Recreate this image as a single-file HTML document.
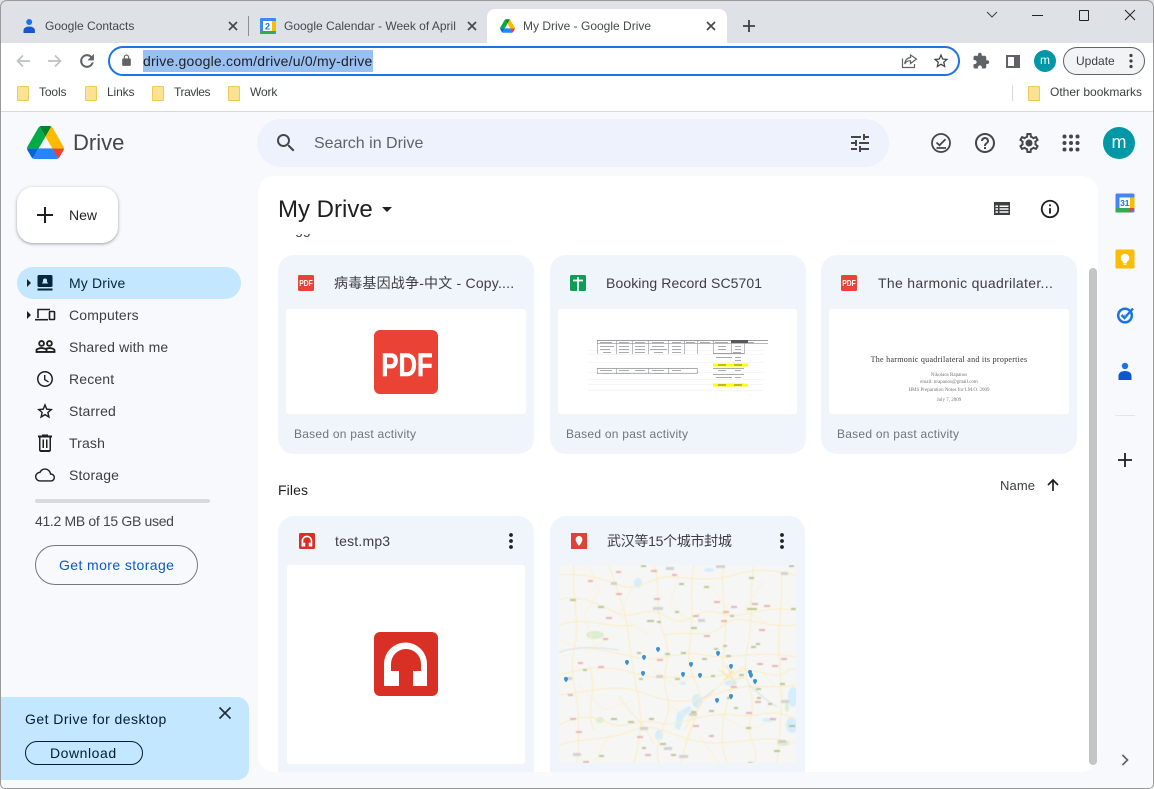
<!DOCTYPE html>
<html><head><meta charset="utf-8"><title>My Drive - Google Drive</title>
<style>
html,body{margin:0;padding:0;background:#f7f9fc}
body{width:1154px;height:789px;overflow:hidden;position:relative;font-family:"Liberation Sans","Noto Sans CJK SC",sans-serif;color:#1f1f1f}
.a{position:absolute}
.t{position:absolute;white-space:nowrap;line-height:20px;font-size:14px}
svg{position:absolute;display:block}
.tab{font-size:12px;color:#45494e}
.bm{font-size:12px;color:#3c4043;letter-spacing:-.12px}
.nav{font-size:14px;color:#3c4043;letter-spacing:.15px}
.card{position:absolute;background:#f0f4fb;border-radius:16px}
.thumb{position:absolute;background:#fff;border-radius:3px}
.ct{font-size:14px;color:#3c4043;letter-spacing:.1px}
.sub{font-size:12px;color:#70757a;letter-spacing:.25px}
.folder{position:absolute;width:10px;height:13px;background:#fde293;border:1px solid #f0c95c;border-radius:1px}
</style></head><body>

<!-- tab strip -->
<div class="a" style="left:0;top:0;width:1154px;height:43px;background:#dee1e6"></div>
<div class="a" style="left:0;top:43px;width:1154px;height:68px;background:#fff"></div>
<div class="a" style="left:0;top:111px;width:1154px;height:1px;background:#d6d8db"></div>

<svg style="left:21px;top:18px" width="16" height="16" viewBox="0 0 16 16"><circle cx="8.200" cy="4" r="3" fill="#1a73e8"/><path d="M2.500 15v-2.500c0-2.500 2.500-4 5.700-4s5.700 1.500 5.700 4V15z" fill="#1557d0"/></svg>
<div class="t tab" style="left:45px;top:16px">Google Contacts</div>
<svg style="left:227px;top:20px" width="12" height="12" viewBox="0 0 12 12"><path d="M2 2l8 8M10 2l-8 8" stroke="#45494e" stroke-width="1.700"/></svg>
<div class="a" style="left:248px;top:16px;width:1px;height:20px;background:#8b8e92"></div>

<svg style="left:260px;top:18px" width="16" height="16" viewBox="0 0 16 16"><rect width="16" height="16" rx="1" fill="#4285f4"/><rect x="12" y="3" width="4" height="10" fill="#fbbc04"/><rect y="13" width="13" height="3" fill="#34a853"/><rect x="3" y="3" width="9" height="10" fill="#fff"/><text x="7.500" y="11.500" font-size="9" font-weight="bold" text-anchor="middle" fill="#1a73e8" font-family="Liberation Sans">2</text></svg>
<div class="a" style="left:284px;top:16px;width:172px;height:20px;overflow:hidden"><div class="t tab" style="left:0;top:0">Google Calendar - Week of April</div></div>
<svg style="left:466px;top:20px" width="12" height="12" viewBox="0 0 12 12"><path d="M2 2l8 8M10 2l-8 8" stroke="#45494e" stroke-width="1.700"/></svg>

<div class="a" style="left:487px;top:9px;width:240px;height:34px;background:#fff;border-radius:8px 8px 0 0"></div>
<svg style="left:500px;top:19px" width="15" height="14" viewBox="0 0 87.300 78"><path d="m6.600 66.850 3.850 6.650c.8 1.400 1.950 2.500 3.300 3.300l13.750-23.800h-27.500c0 1.550.4 3.100 1.200 4.500z" fill="#0066da"/><path d="m43.650 25-13.750-23.800c-1.350.8-2.500 1.900-3.300 3.300l-25.400 44a9.060 9.060 0 0 0 -1.200 4.500h27.500z" fill="#00ac47"/><path d="m73.550 76.800c1.350-.8 2.500-1.900 3.300-3.300l1.600-2.750 7.650-13.250c.8-1.400 1.200-2.950 1.200-4.500h-27.502l5.852 11.500z" fill="#ea4335"/><path d="m43.650 25 13.750-23.800c-1.350-.8-2.900-1.200-4.500-1.200h-18.500c-1.600 0-3.150.45-4.500 1.200z" fill="#00832d"/><path d="m59.800 53h-32.300l-13.750 23.800c1.350.8 2.900 1.200 4.500 1.200h50.800c1.600 0 3.150-.45 4.500-1.200z" fill="#2684fc"/><path d="m73.400 26.500-12.700-22c-.8-1.400-1.950-2.500-3.300-3.300l-13.750 23.800 16.150 28h27.450c0-1.550-.4-3.100-1.200-4.500z" fill="#ffba00"/></svg>
<div class="t tab" style="left:523px;top:16px">My Drive - Google Drive</div>
<svg style="left:705px;top:20px" width="12" height="12" viewBox="0 0 12 12"><path d="M2 2l8 8M10 2l-8 8" stroke="#45494e" stroke-width="1.700"/></svg>
<svg style="left:741px;top:18px" width="16" height="16" viewBox="0 0 16 16"><path d="M8 2v12M2 8h12" stroke="#3c4043" stroke-width="1.800"/></svg>

<!-- window controls -->
<svg style="left:986px;top:10px" width="12" height="10" viewBox="0 0 12 10"><path d="M1 2l5 5 5-5" fill="none" stroke="#3c4043" stroke-width="1"/></svg>
<div class="a" style="left:1032px;top:15px;width:11px;height:1px;background:#222"></div>
<div class="a" style="left:1079px;top:10px;width:8px;height:9px;border:1px solid #222;border-radius:1px"></div>
<svg style="left:1124px;top:9px" width="12" height="12" viewBox="0 0 12 12"><path d="M1 1l10 10M11 1L1 11" stroke="#222" stroke-width="1"/></svg>

<!-- toolbar -->
<svg style="left:15px;top:53px" width="16" height="16" viewBox="0 0 16 16"><path d="M15 8H2.500M8 2.500L2.500 8 8 13.500" fill="none" stroke="#bfc1c4" stroke-width="1.700"/></svg>
<svg style="left:47px;top:53px" width="16" height="16" viewBox="0 0 16 16"><path d="M1 8h12.500M8 2.500L13.500 8 8 13.500" fill="none" stroke="#bfc1c4" stroke-width="1.700"/></svg>
<svg style="left:77px;top:51px" width="20" height="20" viewBox="0 0 24 24"><path fill="#5f6368" stroke="#5f6368" stroke-width=".5" d="M17.650 6.350C16.200 4.900 14.210 4 12 4c-4.420 0-7.990 3.580-7.990 8s3.570 8 7.990 8c3.730 0 6.840-2.550 7.730-6h-2.080c-.82 2.330-3.040 4-5.650 4-3.310 0-6-2.690-6-6s2.690-6 6-6c1.660 0 3.140.69 4.220 1.780L13 11h7V4l-2.350 2.350z"/></svg>
<div class="a" style="left:108px;top:46px;width:848px;height:26px;border:2px solid #1a73e8;border-radius:15px;background:#fff"></div>
<svg style="left:120px;top:54px" width="13" height="13" viewBox="0 0 24 24"><path fill="#5f6368" d="M18 8h-1V6c0-2.760-2.240-5-5-5S7 3.240 7 6v2H6c-1.100 0-2 .9-2 2v10c0 1.100.9 2 2 2h12c1.100 0 2-.9 2-2V10c0-1.100-.9-2-2-2zM9 6c0-1.660 1.340-3 3-3s3 1.340 3 3v2H9V6z"/></svg>
<div class="a" style="left:143px;top:50px;width:230px;height:22px;background:#99c0f2"></div>
<div class="t" style="left:143px;top:51px;font-size:14px;color:#202124;letter-spacing:.22px">drive.google.com/drive/u/0/my-drive</div>
<svg style="left:901px;top:53px" width="17" height="16" viewBox="0 0 17 16"><path d="M1.500 5.500v9h12V11M9.500 2v2.500C5.500 5 4 7.500 3.800 11c1.200-2.500 3-3.300 5.700-3.300V10.500L15.500 6z" fill="none" stroke="#5f6368" stroke-width="1.200"/></svg>
<svg style="left:932px;top:52px" width="18" height="18" viewBox="0 0 24 24"><path fill="#3c4043" d="M22 9.240l-7.190-.62L12 2 9.190 8.630 2 9.240l5.460 4.730L5.820 21 12 17.270 18.180 21l-1.630-7.030L22 9.240zM12 15.400l-3.760 2.270 1-4.280-3.320-2.880 4.380-.38L12 6.100l1.710 4.040 4.380.38-3.320 2.880 1 4.280L12 15.400z"/></svg>
<svg style="left:972px;top:52px" width="18" height="18" viewBox="0 0 24 24"><path fill="#5f6368" d="M20.500 11H19V7c0-1.100-.9-2-2-2h-4V3.500C13 2.120 11.880 1 10.500 1S8 2.120 8 3.500V5H4c-1.100 0-1.990.9-1.990 2v3.800H3.500c1.490 0 2.700 1.210 2.700 2.700s-1.210 2.700-2.700 2.700H2V20c0 1.100.9 2 2 2h3.800v-1.500c0-1.490 1.210-2.700 2.700-2.700 1.490 0 2.700 1.210 2.700 2.700V22H17c1.100 0 2-.9 2-2v-4h1.500c1.380 0 2.500-1.120 2.500-2.500S21.880 11 20.500 11z"/></svg>
<div class="a" style="left:1006px;top:55px;width:14px;height:13px;box-sizing:border-box;border:2px solid #5f6368;border-right-width:6px"></div>
<div class="a" style="left:1034px;top:50px;width:22px;height:22px;border-radius:50%;background:#0097a7;color:#fff;font-size:12px;line-height:21px;text-align:center">m</div>
<div class="a" style="left:1063px;top:47px;width:80px;height:26px;border:1px solid #5f6368;border-radius:14px;background:#f1f3f4"></div>
<div class="t" style="left:1076px;top:51px;font-size:12px;color:#3c4043">Update</div>
<svg style="left:1127px;top:52px" width="8" height="18" viewBox="0 0 8 18"><circle cx="4" cy="3.500" r="1.600" fill="#3c4043"/><circle cx="4" cy="9" r="1.600" fill="#3c4043"/><circle cx="4" cy="14.500" r="1.600" fill="#3c4043"/></svg>

<!-- bookmarks -->
<div class="folder" style="left:17px;top:86px"></div><div class="t bm" style="left:39px;top:82px">Tools</div>
<div class="folder" style="left:85px;top:86px"></div><div class="t bm" style="left:107px;top:82px">Links</div>
<div class="folder" style="left:152px;top:86px"></div><div class="t bm" style="left:174px;top:82px;letter-spacing:-.4px">Travles</div>
<div class="folder" style="left:228px;top:86px"></div><div class="t bm" style="left:250px;top:82px">Work</div>
<div class="a" style="left:1012px;top:85px;width:1px;height:16px;background:#d6d8db"></div>
<div class="folder" style="left:1028px;top:86px"></div><div class="t bm" style="left:1050px;top:82px;letter-spacing:0">Other bookmarks</div>

<!-- drive header -->
<svg style="left:27px;top:126px" width="37" height="33" viewBox="0 0 87.300 78"><path d="m6.600 66.850 3.850 6.650c.8 1.400 1.950 2.500 3.300 3.300l13.750-23.800h-27.500c0 1.550.4 3.100 1.200 4.500z" fill="#0066da"/><path d="m43.650 25-13.750-23.800c-1.350.8-2.500 1.900-3.300 3.300l-25.400 44a9.060 9.060 0 0 0 -1.200 4.500h27.500z" fill="#00ac47"/><path d="m73.550 76.800c1.350-.8 2.500-1.900 3.300-3.300l1.600-2.750 7.650-13.250c.8-1.400 1.200-2.950 1.200-4.500h-27.502l5.852 11.500z" fill="#ea4335"/><path d="m43.650 25 13.750-23.800c-1.350-.8-2.900-1.200-4.500-1.200h-18.500c-1.600 0-3.150.45-4.500 1.200z" fill="#00832d"/><path d="m59.800 53h-32.300l-13.750 23.800c1.350.8 2.900 1.200 4.500 1.200h50.800c1.600 0 3.150-.45 4.500-1.200z" fill="#2684fc"/><path d="m73.400 26.500-12.700-22c-.8-1.400-1.950-2.500-3.300-3.300l-13.750 23.800 16.150 28h27.450c0-1.550-.4-3.100-1.200-4.500z" fill="#ffba00"/></svg>
<div class="t" style="left:73px;top:133px;font-size:22px;color:#444746">Drive</div>

<div class="a" style="left:257px;top:119px;width:632px;height:48px;background:#edf2fc;border-radius:24px"></div>
<svg style="left:274px;top:131px" width="24" height="24" viewBox="0 0 24 24"><path fill="#444746" d="M15.500 14h-.79l-.28-.27A6.471 6.471 0 0 0 16 9.500 6.500 6.500 0 1 0 9.500 16c1.610 0 3.090-.59 4.230-1.570l.27.28v.79l5 4.990L20.490 19l-4.990-5zm-6 0C7.010 14 5 11.990 5 9.500S7.010 5 9.500 5 14 7.010 14 9.500 11.990 14 9.500 14z"/></svg>
<div class="t" style="left:314px;top:134px;font-size:16px;color:#5f6368">Search in Drive</div>
<svg style="left:848px;top:131px" width="24" height="24" viewBox="0 0 24 24"><path fill="#444746" d="M3 17v2h6v-2H3zM3 5v2h10V5H3zm10 16v-2h8v-2h-8v-2h-2v6h2zM7 9v2H3v2h4v2h2V9H7zm14 4v-2H11v2h10zm-6-4h2V7h4V5h-4V3h-2v6z"/></svg>

<svg style="left:929px;top:131px" width="24" height="24" viewBox="0 0 24 24"><circle cx="12" cy="12" r="9" fill="none" stroke="#444746" stroke-width="1.800"/><path d="M7.500 11.500l3 2.800 6-6M7.500 17h9.500" fill="none" stroke="#444746" stroke-width="1.800"/></svg>
<svg style="left:973px;top:131px" width="24" height="24" viewBox="0 0 24 24"><path fill="#444746" d="M11 18h2v-2h-2v2zm1-16C6.480 2 2 6.480 2 12s4.480 10 10 10 10-4.480 10-10S17.520 2 12 2zm0 18c-4.410 0-8-3.590-8-8s3.590-8 8-8 8 3.590 8 8-3.590 8-8 8zm0-14c-2.210 0-4 1.790-4 4h2c0-1.100.9-2 2-2s2 .9 2 2c0 2-3 1.750-3 5h2c0-2.250 3-2.500 3-5 0-2.210-1.790-4-4-4z"/></svg>
<svg style="left:1017px;top:131px" width="24" height="24" viewBox="0 0 24 24"><path fill="#444746" d="M19.430 12.980c.04-.32.07-.64.07-.98 0-.34-.03-.66-.07-.98l2.110-1.650c.19-.15.24-.42.12-.64l-2-3.460a.5.5 0 0 0-.61-.22l-2.490 1c-.52-.4-1.080-.73-1.690-.98l-.38-2.650A.488.488 0 0 0 14 2h-4c-.25 0-.46.18-.49.42l-.38 2.650c-.61.25-1.170.59-1.690.98l-2.490-1a.566.566 0 0 0-.18-.03c-.17 0-.34.09-.43.25l-2 3.460c-.13.22-.07.49.12.64l2.110 1.650c-.04.32-.07.65-.07.98 0 .33.03.66.07.98l-2.110 1.650c-.19.15-.24.42-.12.64l2 3.460a.5.5 0 0 0 .61.22l2.490-1c.52.4 1.080.73 1.690.98l.38 2.650c.03.24.24.42.49.42h4c.25 0 .46-.18.49-.42l.38-2.650c.61-.25 1.170-.59 1.690-.98l2.490 1c.06.02.12.03.18.03.17 0 .34-.09.43-.25l2-3.460c.12-.22.07-.49-.12-.64l-2.110-1.650zm-1.980-1.710c.04.31.05.52.05.73 0 .21-.02.43-.05.73l-.14 1.130.89.7 1.080.84-.7 1.210-1.270-.51-1.040-.42-.9.68c-.43.32-.84.56-1.250.73l-1.060.43-.16 1.130-.2 1.350h-1.400l-.19-1.350-.16-1.130-1.060-.43c-.43-.18-.83-.41-1.230-.71l-.91-.7-1.060.43-1.270.51-.7-1.210 1.080-.84.89-.7-.14-1.130c-.03-.31-.05-.54-.05-.74s.02-.43.05-.73l.14-1.130-.89-.7-1.080-.84.7-1.210 1.270.51 1.040.42.9-.68c.43-.32.84-.56 1.250-.73l1.060-.43.16-1.130.2-1.350h1.390l.19 1.350.16 1.130 1.060.43c.43.18.83.41 1.230.71l.91.7 1.060-.43 1.270-.51.7 1.210-1.070.85-.89.7.14 1.130z"/><circle cx="12" cy="12" r="3.500" fill="#444746"/></svg>
<svg style="left:1061px;top:133px" width="20" height="20" viewBox="0 0 20 20" fill="#444746"><circle cx="3.500" cy="3.500" r="2"/><circle cx="10" cy="3.500" r="2"/><circle cx="16.500" cy="3.500" r="2"/><circle cx="3.500" cy="10" r="2"/><circle cx="10" cy="10" r="2"/><circle cx="16.500" cy="10" r="2"/><circle cx="3.500" cy="16.500" r="2"/><circle cx="10" cy="16.500" r="2"/><circle cx="16.500" cy="16.500" r="2"/></svg>
<div class="a" style="left:1103px;top:127px;width:32px;height:32px;border-radius:50%;background:#0097a7;color:#fff;font-size:18px;line-height:30px;text-align:center">m</div>

<!-- sidebar -->
<div class="a" style="left:17px;top:187px;width:101px;height:56px;background:#fff;border-radius:16px;box-shadow:0 1px 2px rgba(60,64,67,.3),0 1px 3px 1px rgba(60,64,67,.15)"></div>
<svg style="left:33px;top:203px" width="24" height="24" viewBox="0 0 24 24"><path d="M12 4v16M4 12h16" stroke="#1f1f1f" stroke-width="2"/></svg>
<div class="t" style="left:69px;top:205px;font-size:14px;color:#1f1f1f">New</div>

<div class="a" style="left:17px;top:267px;width:224px;height:32px;border-radius:16px;background:#c2e7ff"></div>
<svg style="left:27px;top:279px" width="5" height="8" viewBox="0 0 5 8"><path d="M0 0l4 4-4 4z" fill="#1f1f1f"/></svg>
<svg style="left:27px;top:311px" width="5" height="8" viewBox="0 0 5 8"><path d="M0 0l4 4-4 4z" fill="#1f1f1f"/></svg>

<svg style="left:36px;top:273px" width="18" height="20" viewBox="0 0 18 20"><rect x="1.500" y="2" width="15" height="12" rx="1.500" fill="#04263f"/><rect x="1.500" y="15.500" width="15" height="2" fill="#04263f"/><path d="M6 10.500l1.500-3h3l1.500 3z" fill="#c2e7ff"/><circle cx="9" cy="7.500" r="2" fill="#c2e7ff"/></svg>
<div class="t nav" style="left:69px;top:273px;color:#04263f">My Drive</div>

<svg style="left:35px;top:305px" width="21" height="20" viewBox="0 0 21 20"><path d="M3 13V4.500h12" fill="none" stroke="#1f1f1f" stroke-width="1.600"/><path d="M0 14.700h13" stroke="#1f1f1f" stroke-width="1.600"/><rect x="14.500" y="6.500" width="5" height="8" rx=".8" fill="none" stroke="#1f1f1f" stroke-width="1.600"/></svg>
<div class="t nav" style="left:69px;top:305px">Computers</div>

<svg style="left:35px;top:336px" width="21" height="21" viewBox="0 0 24 24"><path fill="#1f1f1f" stroke="#1f1f1f" stroke-width=".6" d="M16.500 13c-1.200 0-3.070.34-4.500 1-1.430-.67-3.300-1-4.500-1C5.330 13 1 14.080 1 16.250V19h22v-2.750c0-2.170-4.330-3.250-6.500-3.250zm-4 4.500h-10v-1.250c0-.54 2.560-1.750 5-1.750s5 1.210 5 1.750v1.250zm9 0H14v-1.250c0-.46-.2-.86-.52-1.220.88-.3 1.960-.53 3.020-.53 2.440 0 5 1.210 5 1.750v1.250zM7.500 12c1.930 0 3.500-1.570 3.500-3.500S9.430 5 7.500 5 4 6.570 4 8.500 5.570 12 7.500 12zm0-5.500c1.100 0 2 .9 2 2s-.9 2-2 2-2-.9-2-2 .9-2 2-2zm9 5.500c1.930 0 3.500-1.570 3.500-3.500S18.430 5 16.500 5 13 6.570 13 8.500s1.570 3.500 3.500 3.500zm0-5.500c1.100 0 2 .9 2 2s-.9 2-2 2-2-.9-2-2 .9-2 2-2z"/></svg>
<div class="t nav" style="left:69px;top:337px">Shared with me</div>

<svg style="left:33px;top:367px" width="24" height="24" viewBox="0 0 24 24"><path fill="#1f1f1f" d="M11.990 4C7.570 4 4 7.580 4 12s3.570 8 7.990 8C16.420 20 20 16.420 20 12s-3.580-8-8.010-8zM12 18.500c-3.590 0-6.500-2.910-6.500-6.500S8.410 5.500 12 5.500s6.500 2.910 6.500 6.500-2.910 6.500-6.500 6.500zM12.400 8H11v5l4.200 2.500.7-1.100-3.500-2.100z"/></svg>
<div class="t nav" style="left:69px;top:369px">Recent</div>

<svg style="left:33px;top:399px" width="24" height="24" viewBox="0 0 24 24"><path fill="#1f1f1f" d="M20 10l-5.800-.5L12 4 9.800 9.500 4 10l4.400 3.800L7 19.500l5-3 5 3-1.300-5.700L20 10zm-8 4.800l-2.800 1.700.7-3.200-2.400-2.100 3.200-.3L12 7.900l1.300 3 3.200.3-2.400 2.100.7 3.200-2.800-1.700z"/></svg>
<div class="t nav" style="left:69px;top:401px">Starred</div>

<svg style="left:33px;top:431px" width="24" height="24" viewBox="0 0 24 24"><path fill="#1f1f1f" d="M15 4.500V3.500H9v1H5v2h1v12.500c0 1.100.9 2 2 2h8c1.100 0 2-.9 2-2V6.500h1v-2h-4zm1.500 14.500h-9V6.500h9V19zM9.500 8.500H11V17H9.500zm3.500 0h1.500V17H13z"/></svg>
<div class="t nav" style="left:69px;top:433px">Trash</div>

<svg style="left:35px;top:464px" width="20" height="22" viewBox="0 0 24 24"><path fill="#1f1f1f" d="M19.350 10.040C18.670 6.590 15.640 4 12 4 9.110 4 6.600 5.640 5.350 8.040 2.340 8.360 0 10.910 0 14c0 3.310 2.690 6 6 6h13c2.760 0 5-2.240 5-5 0-2.640-2.050-4.780-4.650-4.960zM19 18.300H6c-2.300 0-4.300-1.900-4.300-4.300 0-2.200 1.600-4 3.800-4.300l1-.1.5-.9C8 6.800 9.900 5.700 12 5.700c2.800 0 5.100 2 5.700 4.700l.3 1.300 1.400.1c1.700.1 2.900 1.500 2.900 3.200 0 1.800-1.500 3.300-3.300 3.300z"/></svg>
<div class="t nav" style="left:69px;top:465px">Storage</div>

<div class="a" style="left:35px;top:499px;width:175px;height:4px;border-radius:2px;background:#d9dadc"></div>
<div class="t" style="left:35px;top:511px;font-size:14px;color:#444746;letter-spacing:-.33px">41.2 MB of 15 GB used</div>
<div class="a" style="left:35px;top:545px;width:161px;height:38px;border:1px solid #747775;border-radius:20px"></div>
<div class="t" style="left:59px;top:555px;font-size:14px;color:#0b57d0;letter-spacing:.4px">Get more storage</div>

<!-- desktop promo -->
<div class="a" style="left:1px;top:697px;width:248px;height:83px;background:#c2e7ff;border-radius:0 12px 12px 0"></div>
<div class="t" style="left:25px;top:709px;font-size:14px;color:#001d35;letter-spacing:.45px">Get Drive for desktop</div>
<svg style="left:218px;top:706px" width="14" height="14" viewBox="0 0 14 14"><path d="M1.500 1.500l11 11M12.500 1.500l-11 11" stroke="#1f2a36" stroke-width="1.600"/></svg>
<div class="a" style="left:25px;top:741px;width:116px;height:22px;border:1px solid #001d35;border-radius:12px"></div>
<div class="t" style="left:50px;top:743px;font-size:14px;color:#001d35;letter-spacing:.55px">Download</div>

<!-- main panel -->
<div class="a" style="left:258px;top:176px;width:840px;height:596px;background:#fff;border-radius:16px"></div>
<div class="t" style="left:278px;top:199px;font-size:24px;line-height:22px;color:#1f1f1f">My Drive</div>
<svg style="left:382px;top:207px" width="11" height="5" viewBox="0 0 11 5"><path d="M0 0h10L5 5z" fill="#1f1f1f"/></svg>
<svg style="left:994px;top:202px" width="16" height="13" viewBox="0 0 16 13"><path fill="#3c4043" d="M0 0h16v13H0z"/><path fill="#fff" d="M1.500 3.500h2.500v1.500H1.500zM5.500 3.500h9v1.500h-9zM1.500 6.300h2.500v1.500H1.500zM5.500 6.300h9v1.500h-9zM1.500 9.200h2.500v1.500H1.500zM5.500 9.200h9v1.500h-9z"/></svg>
<svg style="left:1039px;top:198px" width="22" height="22" viewBox="0 0 24 24"><path fill="#1f1f1f" d="M11 7h2v2h-2zm0 4h2v6h-2zm1-9C6.480 2 2 6.480 2 12s4.480 10 10 10 10-4.480 10-10S17.520 2 12 2zm0 18c-4.410 0-8-3.590-8-8s3.590-8 8-8 8 3.590 8 8-3.590 8-8 8z"/></svg>

<div class="a" style="left:278px;top:234px;width:60px;height:5px;overflow:hidden"><div class="t" style="left:0;top:-15px;font-size:14px;color:#3c4043">Suggested</div></div>

<!-- scrollbar -->
<div class="a" style="left:1089px;top:268px;width:8px;height:497px;border-radius:4px;background:#c4c4c4"></div>

<!-- suggested cards -->
<div class="card" style="left:278px;top:255px;width:256px;height:199px"></div>
<div class="thumb" style="left:286px;top:309px;width:240px;height:105px"></div>
<svg style="left:298px;top:275px" width="16" height="16" viewBox="0 0 16 16"><rect width="16" height="16" rx="1.500" fill="#ea4335"/><text transform="translate(8 11) scale(.8 1)" font-size="8.500" font-weight="bold" text-anchor="middle" fill="#fff" font-family="Liberation Sans">PDF</text></svg>
<div class="a" style="left:334px;top:273px;width:184px;height:20px;overflow:hidden"><div class="t ct" style="left:0;top:0;letter-spacing:.2px">病毒基因战争-中文 - Copy....</div></div>
<svg style="left:374px;top:330px" width="64" height="64" viewBox="0 0 64 64"><rect width="64" height="64" rx="6" fill="#ea4335"/><text transform="translate(33 46) scale(.8 1)" font-size="32" font-weight="bold" text-anchor="middle" fill="#fff" stroke="#fff" stroke-width=".6" font-family="Liberation Sans">PDF</text></svg>
<div class="t sub" style="left:294px;top:424px">Based on past activity</div>

<div class="card" style="left:550px;top:255px;width:256px;height:199px"></div>
<div class="thumb" style="left:558px;top:309px;width:239px;height:105px"></div>
<svg style="left:570px;top:275px" width="16" height="16" viewBox="0 0 16 16"><rect width="16" height="16" rx="1.500" fill="#0f9d58"/><path d="M3 5.500h10M8 2v14" stroke="#fff" stroke-width="1.700"/></svg>
<div class="t ct" style="left:606px;top:273px">Booking Record SC5701</div>
<svg style="left:588px;top:338px" width="180" height="55" viewBox="0 0 180 55">
<defs><filter id="s" x="-2%" y="-5%" width="104%" height="110%"><feGaussianBlur stdDeviation=".35"/></filter></defs>
<g filter="url(#s)">
<g fill="#eceef0"><rect x="0" y="12" width="175" height=".6"/><rect x="0" y="16" width="175" height=".6"/><rect x="0" y="24" width="175" height=".6"/><rect x="0" y="34" width="175" height=".6"/><rect x="0" y="41" width="175" height=".6"/><rect x="0" y="46" width="175" height=".6"/><rect x="0" y="52" width="175" height=".6"/></g>
<g fill="#6f7276"><rect x="9" y="2" width="171" height=".7"/><rect x="9" y="5.500" width="171" height=".5"/><rect x="125" y="15" width="31" height=".7"/><rect x="125" y="30" width="31" height=".6"/><rect x="125" y="36" width="31" height=".6"/><rect x="9" y="30" width="100" height=".6"/><rect x="9" y="35" width="100" height=".5"/></g>
<g fill="#8d9094"><rect x="9" y="2" width=".6" height="14"/><rect x="28" y="2" width=".6" height="14"/><rect x="44" y="2" width=".6" height="14"/><rect x="60" y="2" width=".6" height="14"/><rect x="80" y="2" width=".6" height="14"/><rect x="96" y="2" width=".6" height="14"/><rect x="109" y="2" width=".6" height="14"/><rect x="125" y="2" width=".6" height="14"/><rect x="143" y="2" width=".6" height="14"/><rect x="156" y="2" width=".6" height="14"/><rect x="9" y="30" width=".6" height="6"/><rect x="28" y="30" width=".6" height="6"/><rect x="60" y="30" width=".6" height="6"/><rect x="80" y="30" width=".6" height="6"/><rect x="109" y="30" width=".6" height="6"/></g>
<g fill="#a8aaad"><rect x="12" y="4" width="12" height="1"/><rect x="31" y="4" width="10" height="1"/><rect x="47" y="4" width="10" height="1"/><rect x="64" y="4" width="12" height="1"/><rect x="84" y="4" width="9" height="1"/><rect x="98" y="4" width="9" height="1"/><rect x="112" y="4" width="10" height="1"/><rect x="127" y="4" width="13" height="1"/><rect x="159" y="4" width="7" height="1"/><rect x="12" y="8" width="14" height="1"/><rect x="31" y="8" width="10" height="1"/><rect x="47" y="8" width="10" height="1"/><rect x="64" y="8" width="12" height="1"/><rect x="84" y="8" width="9" height="1"/><rect x="130" y="8" width="8" height="1"/><rect x="147" y="8" width="6" height="1"/><rect x="12" y="11" width="10" height="1"/><rect x="31" y="11" width="10" height="1"/><rect x="47" y="11" width="10" height="1"/><rect x="62" y="11" width="17" height="1"/><rect x="84" y="11" width="9" height="1"/><rect x="130" y="11" width="8" height="1"/><rect x="147" y="11" width="6" height="1"/><rect x="15" y="14" width="8" height="1"/><rect x="31" y="14" width="10" height="1"/><rect x="47" y="14" width="10" height="1"/><rect x="66" y="14" width="9" height="1"/><rect x="84" y="14" width="9" height="1"/><rect x="145" y="14" width="8" height="1"/><rect x="128" y="19" width="16" height="1"/><rect x="147" y="19" width="6" height="1"/><rect x="147" y="22" width="6" height="1"/><rect x="12" y="32" width="12" height="1"/><rect x="31" y="32" width="10" height="1"/><rect x="47" y="32" width="10" height="1"/><rect x="64" y="32" width="12" height="1"/><rect x="84" y="32" width="9" height="1"/><rect x="130" y="32" width="8" height="1"/><rect x="147" y="32" width="6" height="1"/><rect x="15" y="35" width="8" height="1"/><rect x="31" y="35" width="10" height="1"/><rect x="66" y="35" width="9" height="1"/><rect x="128" y="39" width="16" height="1"/><rect x="147" y="39" width="6" height="1"/></g>
<rect x="143" y="2" width="17" height="3" fill="#55585c"/>
<rect x="125" y="25.500" width="35" height="3" fill="#ffff00"/><rect x="125" y="45.500" width="35" height="3" fill="#ffff00"/>
<rect x="130" y="26.500" width="8" height="1" fill="#807a30"/><rect x="146" y="26.500" width="8" height="1" fill="#807a30"/><rect x="130" y="46.500" width="8" height="1" fill="#807a30"/><rect x="146" y="46.500" width="8" height="1" fill="#807a30"/>
</g>
</svg>
<div class="t sub" style="left:566px;top:424px">Based on past activity</div>

<div class="card" style="left:821px;top:255px;width:256px;height:199px"></div>
<div class="thumb" style="left:829px;top:309px;width:240px;height:105px"></div>
<svg style="left:841px;top:275px" width="16" height="16" viewBox="0 0 16 16"><rect width="16" height="16" rx="1.500" fill="#ea4335"/><text transform="translate(8 11) scale(.8 1)" font-size="8.500" font-weight="bold" text-anchor="middle" fill="#fff" font-family="Liberation Sans">PDF</text></svg>
<div class="t ct" style="left:878px;top:273px;letter-spacing:.32px">The harmonic quadrilater...</div>
<div class="a" style="left:829px;top:355px;width:240px;text-align:center;font-family:'Liberation Serif',serif;font-size:8px;line-height:10px;color:#333;letter-spacing:.28px;white-space:nowrap">The harmonic quadrilateral and its properties</div>
<div class="a" style="left:829px;top:372px;width:240px;text-align:center;font-family:'Liberation Serif',serif;font-size:5px;line-height:7px;color:#777;white-space:nowrap">Nikolaos Rapanos</div>
<div class="a" style="left:829px;top:379px;width:240px;text-align:center;font-family:'Liberation Serif',serif;font-size:5px;line-height:7px;color:#777;white-space:nowrap">email: nrapanos@gmail.com</div>
<div class="a" style="left:829px;top:387px;width:240px;text-align:center;font-family:'Liberation Serif',serif;font-size:5px;line-height:7px;color:#777;white-space:nowrap">HMS Preparation Notes for I.M.O. 2009</div>
<div class="a" style="left:829px;top:397px;width:240px;text-align:center;font-family:'Liberation Serif',serif;font-size:5px;line-height:7px;color:#777;white-space:nowrap">July 7, 2009</div>
<div class="t sub" style="left:837px;top:424px">Based on past activity</div>

<!-- files -->
<div class="t" style="left:278px;top:480px;font-size:14px;color:#1f1f1f;letter-spacing:.1px">Files</div>
<div class="t" style="left:1000px;top:476px;font-size:13px;color:#3c4043;letter-spacing:.1px">Name</div>
<svg style="left:1046px;top:478px" width="14" height="14" viewBox="0 0 14 14"><path d="M7 13V2M2 7l5-5 5 5" fill="none" stroke="#1f1f1f" stroke-width="1.700"/></svg>

<div class="a" style="left:278px;top:516px;width:527px;height:256px;overflow:hidden">
  <div class="card" style="left:0;top:0;width:256px;height:270px"></div>
  <div class="thumb" style="left:9px;top:49px;width:238px;height:199px"></div>
  <div class="card" style="left:272px;top:0;width:255px;height:270px"></div>
</div>
<svg style="left:299px;top:533px" width="16" height="16" viewBox="0 0 64 64"><rect width="64" height="64" rx="6" fill="#d93025"/><path d="M10 54V32a21.500 21.500 0 0 1 43 0V54H39V39H47V32a15 15 0 0 0-30 0V39H25V54z" fill="#fff"/></svg>
<div class="t ct" style="left:335px;top:531px;letter-spacing:.2px">test.mp3</div>
<svg style="left:507px;top:532px" width="8" height="18" viewBox="0 0 8 18" fill="#1f1f1f"><circle cx="4" cy="3" r="1.900"/><circle cx="4" cy="9" r="1.900"/><circle cx="4" cy="15" r="1.900"/></svg>
<svg style="left:374px;top:632px" width="64" height="64" viewBox="0 0 64 64"><rect width="64" height="64" rx="6" fill="#d93025"/><path d="M10 54V32a21.500 21.500 0 0 1 43 0V54H39V39H47V32a15 15 0 0 0-30 0V39H25V54z" fill="#fff"/></svg>

<svg style="left:571px;top:533px" width="16" height="16" viewBox="0 0 16 16"><rect width="16" height="16" fill="#df4337"/><path d="M8 3a3.400 3.400 0 0 1 3.400 3.400C11.400 9 8 13 8 13S4.600 9 4.600 6.400A3.400 3.400 0 0 1 8 3z" fill="#fff"/></svg>
<div class="t ct" style="left:607px;top:531px;letter-spacing:-.3px">武汉等15个城市封城</div>
<svg style="left:778px;top:532px" width="8" height="18" viewBox="0 0 8 18" fill="#1f1f1f"><circle cx="4" cy="3" r="1.900"/><circle cx="4" cy="9" r="1.900"/><circle cx="4" cy="15" r="1.900"/></svg>

<svg style="left:559px;top:565px" width="237" height="198" viewBox="0 0 237 198">
<defs><filter id="b" x="-5%" y="-5%" width="110%" height="110%"><feGaussianBlur stdDeviation=".5"/></filter></defs>
<rect width="237" height="198" fill="#f6f6f5"/>
<g filter="url(#b)">
<g fill="#d4eefb"><ellipse cx="79" cy="18" rx="4" ry="5"/><ellipse cx="138" cy="136" rx="5" ry="7"/><path d="M118 148l12-7 3 3-9 9-3 12-5-2z"/><ellipse cx="234" cy="132" rx="5" ry="10"/><ellipse cx="233" cy="160" rx="6" ry="8"/><ellipse cx="100" cy="170" rx="4" ry="5"/><ellipse cx="124" cy="118" rx="3" ry="2"/><ellipse cx="172" cy="118" rx="6" ry="3"/><ellipse cx="210" cy="155" rx="7" ry="2"/><ellipse cx="150" cy="5" rx="5" ry="2"/></g>
<g fill="#dcedd0"><ellipse cx="36" cy="70" rx="9" ry="4"/><ellipse cx="41" cy="155" rx="4" ry="3"/><ellipse cx="224" cy="178" rx="6" ry="3"/><ellipse cx="228" cy="142" rx="2" ry="5"/></g>
<g fill="none" stroke="#fcecc0" stroke-width="1">
<path d="M0 10C20 8 40 12 60 20S90 12 110 12 150 18 175 10 215 6 237 10"/>
<path d="M0 35C20 28 40 40 58 48S85 38 108 52 135 40 160 48 200 40 237 45"/>
<path d="M0 88C20 78 45 85 75 92S115 84 145 90 190 84 237 92"/>
<path d="M0 110C25 102 50 100 75 108S115 110 140 112 180 100 205 108 225 100 237 105"/>
<path d="M0 130C30 126 60 118 85 128S125 140 160 128 200 125 237 120"/>
<path d="M0 160C20 150 35 150 50 158S80 152 100 158 140 146 175 150 210 140 237 155"/>
<path d="M0 180C25 172 50 176 75 165S120 180 160 178 200 170 237 178"/>
<path d="M15 0C12 30 22 55 15 85S25 130 18 198"/>
<path d="M50 0C58 25 65 40 68 60S72 95 78 125 82 170 75 198"/>
<path d="M95 0C102 20 95 45 105 70S100 105 108 130 92 170 100 198"/>
<path d="M135 0C130 25 135 45 132 70S128 100 138 120 128 165 122 198"/>
<path d="M165 0C160 28 170 50 165 85S172 108 172 120 155 165 168 198"/>
<path d="M195 0C190 25 195 55 188 85S198 125 192 150 200 180 196 198"/>
<path d="M222 10C225 35 218 60 220 90S225 130 218 198"/>
<path d="M0 60C30 50 50 65 75 60"/>
<path d="M105 70C130 65 150 75 165 60S205 65 237 60"/>
<path d="M172 110L145 135 125 165"/>
<path d="M165 100l10 10 8-8 12 10"/>
<path d="M60 130C70 150 85 155 95 180"/>
<path d="M30 100C40 125 25 145 35 165"/>
</g>
<g fill="none" stroke="#fdf0cf" stroke-width=".8">
<path d="M30 0l10 25 -15 25 10 30M75 20l-15 30 30 20M120 10l-10 30 20 15M150 20l20 25 -10 20M205 15l-20 30 25 15M0 75l30 10 25-15M90 100l25 20 30-10M20 120l25 25 30-10M110 140l25 15 -10 25M160 150l30 15 25-10M50 170l-15 28M140 170l20 28M205 110l20 20"/>
</g>
<g fill="none" stroke="#fae3a0" stroke-width="1"><path d="M160 105l15 10 10-3M165 115l10-10M168 100l8 20"/></g>
<path d="M0 87c20-6 40-5 60-2" fill="none" stroke="#d5e2ee" stroke-width="1"/>
<path d="M190 120c10 8 15 14 28 22" fill="none" stroke="#dfe4e8" stroke-width="1.200"/>
<path d="M135 140c6-6 12-8 20-15" fill="none" stroke="#dfe4e8" stroke-width="1.200"/>
</g>
<g filter="url(#b)" opacity=".75">
<g fill="#e3a09c"><rect x="29" y="15" width="5" height="2"/><rect x="57" y="6" width="5" height="2"/><rect x="92" y="5" width="6" height="2"/><rect x="113" y="9" width="5" height="2"/><rect x="57" y="28" width="6" height="2"/><rect x="95" y="33" width="6" height="2"/><rect x="155" y="36" width="6" height="2"/><rect x="172" y="41" width="6" height="2"/><rect x="193" y="38" width="6" height="2"/><rect x="205" y="40" width="6" height="2"/><rect x="164" y="46" width="6" height="2"/><rect x="47" y="52" width="6" height="2"/><rect x="134" y="50" width="6" height="2"/><rect x="162" y="55" width="6" height="2"/><rect x="200" y="64" width="6" height="2"/><rect x="44" y="73" width="5" height="2"/><rect x="145" y="70" width="6" height="2"/><rect x="222" y="93" width="6" height="2"/><rect x="19" y="97" width="5" height="2"/><rect x="39" y="101" width="6" height="2"/><rect x="98" y="94" width="6" height="2"/><rect x="198" y="98" width="6" height="2"/><rect x="213" y="100" width="6" height="2"/><rect x="172" y="121" width="6" height="2"/><rect x="9" y="129" width="5" height="2"/><rect x="196" y="136" width="6" height="2"/><rect x="187" y="147" width="6" height="2"/><rect x="211" y="153" width="6" height="2"/><rect x="11" y="153" width="6" height="2"/><rect x="17" y="166" width="6" height="2"/><rect x="78" y="171" width="6" height="2"/><rect x="134" y="160" width="6" height="2"/><rect x="150" y="170" width="5" height="2"/><rect x="86" y="189" width="6" height="2"/><rect x="24" y="196" width="6" height="2"/></g>
<g fill="#a6b878"><rect x="82" y="0" width="5" height="2"/><rect x="120" y="18" width="5" height="2"/><rect x="190" y="12" width="5" height="2"/><rect x="230" y="0" width="5" height="2"/><rect x="145" y="21" width="5" height="2"/><rect x="11" y="34" width="6" height="2"/><rect x="39" y="41" width="6" height="2"/><rect x="116" y="46" width="4" height="2"/><rect x="188" y="43" width="5" height="2"/><rect x="193" y="43" width="5" height="2"/><rect x="232" y="43" width="5" height="2"/><rect x="88" y="55" width="7" height="2"/><rect x="98" y="56" width="4" height="2"/><rect x="132" y="62" width="6" height="2"/><rect x="171" y="50" width="4" height="2"/><rect x="155" y="83" width="4" height="2"/><rect x="164" y="80" width="4" height="2"/><rect x="192" y="81" width="5" height="2"/><rect x="197" y="78" width="4" height="2"/><rect x="78" y="87" width="4" height="2"/><rect x="106" y="88" width="5" height="2"/><rect x="122" y="87" width="5" height="2"/><rect x="143" y="93" width="5" height="2"/><rect x="167" y="90" width="5" height="2"/><rect x="24" y="104" width="4" height="2"/><rect x="80" y="113" width="4" height="2"/><rect x="116" y="113" width="5" height="2"/><rect x="152" y="110" width="4" height="2"/><rect x="180" y="109" width="5" height="2"/><rect x="221" y="118" width="5" height="2"/><rect x="197" y="123" width="5" height="2"/><rect x="168" y="132" width="5" height="2"/><rect x="198" y="132" width="4" height="2"/><rect x="209" y="138" width="4" height="2"/><rect x="175" y="142" width="4" height="2"/><rect x="150" y="145" width="5" height="2"/><rect x="132" y="146" width="5" height="2"/><rect x="52" y="153" width="6" height="2"/><rect x="69" y="156" width="6" height="2"/><rect x="90" y="153" width="5" height="2"/><rect x="230" y="160" width="6" height="2"/><rect x="187" y="162" width="5" height="2"/><rect x="101" y="178" width="6" height="2"/><rect x="83" y="182" width="4" height="2"/><rect x="112" y="189" width="5" height="2"/><rect x="40" y="190" width="5" height="2"/><rect x="215" y="185" width="6" height="2"/><rect x="189" y="197" width="5" height="1"/></g>
<g fill="#c8c8c5"><rect x="52" y="17" width="6" height="3"/><rect x="107" y="2" width="8" height="3"/><rect x="157" y="0" width="9" height="3"/><rect x="222" y="7" width="7" height="3"/><rect x="94" y="42" width="10" height="3"/><rect x="139" y="54" width="7" height="3"/><rect x="5" y="112" width="8" height="3"/><rect x="97" y="110" width="7" height="3"/><rect x="130" y="148" width="8" height="3"/><rect x="222" y="135" width="8" height="3"/><rect x="81" y="162" width="8" height="3"/><rect x="105" y="182" width="8" height="3"/><rect x="14" y="188" width="8" height="3"/><rect x="120" y="190" width="9" height="3"/><rect x="219" y="175" width="8" height="3"/></g>
</g>
<g fill="#3a92d0">
<path d="M7 112a2 2 0 0 1 2 2c0 1.300-2 3.300-2 3.300s-2-2-2-3.300a2 2 0 0 1 2-2z"/>
<path d="M68 95a2 2 0 0 1 2 2c0 1.300-2 3.300-2 3.300s-2-2-2-3.300a2 2 0 0 1 2-2z"/>
<path d="M85 90a2 2 0 0 1 2 2c0 1.300-2 3.300-2 3.300s-2-2-2-3.300a2 2 0 0 1 2-2z"/>
<path d="M99 82a2 2 0 0 1 2 2c0 1.300-2 3.300-2 3.300s-2-2-2-3.300a2 2 0 0 1 2-2z"/>
<path d="M84 106a2 2 0 0 1 2 2c0 1.300-2 3.300-2 3.300s-2-2-2-3.300a2 2 0 0 1 2-2z"/>
<path d="M124 107a2 2 0 0 1 2 2c0 1.300-2 3.300-2 3.300s-2-2-2-3.300a2 2 0 0 1 2-2z"/>
<path d="M132 97a2 2 0 0 1 2 2c0 1.300-2 3.300-2 3.300s-2-2-2-3.300a2 2 0 0 1 2-2z"/>
<path d="M141 108a2 2 0 0 1 2 2c0 1.300-2 3.300-2 3.300s-2-2-2-3.300a2 2 0 0 1 2-2z"/>
<path d="M159 86a2 2 0 0 1 2 2c0 1.300-2 3.300-2 3.300s-2-2-2-3.300a2 2 0 0 1 2-2z"/>
<path d="M172 99a2 2 0 0 1 2 2c0 1.300-2 3.300-2 3.300s-2-2-2-3.300a2 2 0 0 1 2-2z"/>
<path d="M191 105a2 2 0 0 1 2 2c0 1.300-2 3.300-2 3.300s-2-2-2-3.300a2 2 0 0 1 2-2z"/>
<path d="M192 108a2 2 0 0 1 2 2c0 1.300-2 3.300-2 3.300s-2-2-2-3.300a2 2 0 0 1 2-2z"/>
<path d="M196 114a2 2 0 0 1 2 2c0 1.300-2 3.300-2 3.300s-2-2-2-3.300a2 2 0 0 1 2-2z"/>
<path d="M172 129a2 2 0 0 1 2 2c0 1.300-2 3.300-2 3.300s-2-2-2-3.300a2 2 0 0 1 2-2z"/>
<path d="M158 133a2 2 0 0 1 2 2c0 1.300-2 3.300-2 3.300s-2-2-2-3.300a2 2 0 0 1 2-2z"/>
</g>
</svg>

<!-- side panel -->
<svg style="left:1115px;top:193px" width="20" height="20" viewBox="0 0 20 20"><rect x="0.500" y="0.500" width="19" height="19" rx="1.500" fill="#4285f4"/><rect x="15" y="4.500" width="4.500" height="11" fill="#fbbc04"/><rect x="0.500" y="15" width="15" height="4.500" fill="#34a853"/><path d="M15 15h4.500L15 19.500z" fill="#ea4335"/><rect x="4.500" y="4.500" width="10.500" height="10.500" fill="#fff"/><text x="9.800" y="13" font-size="8.500" font-weight="bold" text-anchor="middle" fill="#1a73e8" font-family="Liberation Sans">31</text></svg>
<svg style="left:1115px;top:249px" width="20" height="20" viewBox="0 0 20 20"><rect x="0.500" y="0.500" width="19" height="19" rx="1.500" fill="#fbbc04"/><circle cx="10" cy="9" r="4.300" fill="#fff"/><rect x="8" y="12" width="4" height="2" fill="#fff"/><rect x="8.300" y="14.500" width="3.400" height="1.200" fill="#fff"/></svg>
<svg style="left:1115px;top:305px" width="20" height="20" viewBox="0 0 20 20"><circle cx="10" cy="10.500" r="6.800" fill="none" stroke="#1a73e8" stroke-width="2.500"/><path d="M6.500 10l3 3L18 3.500" fill="none" stroke="#1a73e8" stroke-width="2.400"/><circle cx="10" cy="10.500" r="1" fill="#669df6"/></svg>
<svg style="left:1116px;top:361px" width="18" height="20" viewBox="0 0 18 20"><circle cx="9" cy="5" r="3.200" fill="#1a73e8"/><path d="M2.500 19v-4c0-3 2.500-5 6.500-5s6.500 2 6.500 5v4z" fill="#0b57d0"/></svg>
<div class="a" style="left:1115px;top:415px;width:20px;height:1px;background:#e3e5e8"></div>
<svg style="left:1117px;top:452px" width="16" height="16" viewBox="0 0 16 16"><path d="M8 1v14M1 8h14" stroke="#1f1f1f" stroke-width="1.800"/></svg>
<svg style="left:1120px;top:754px" width="10" height="12" viewBox="0 0 10 12"><path d="M2.500 1l5 5-5 5" fill="none" stroke="#5f6368" stroke-width="1.700"/></svg>

<!-- window border -->
<div class="a" style="left:0;top:0;width:1152px;height:787px;border:1px solid #9a9a9a;border-radius:7px 7px 5px 5px;pointer-events:none"></div>
</body></html>
